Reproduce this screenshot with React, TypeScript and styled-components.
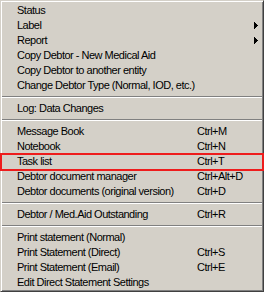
import React, { FC } from "react";
import styled, { createGlobalStyle } from "styled-components";

const menuFace = "#d4d0c8";

const GlobalStyle = createGlobalStyle`
  html, body {
    margin: 0;
    padding: 0;
    background: #ffffff;
  }
  body {
    font-family: Tahoma, "Liberation Sans", Arial, sans-serif;
    font-size: 11px;
    letter-spacing: -0.5px;
    color: #000000;
  }
`;

const Menu = styled.div`
  width: 264px;
  box-sizing: border-box;
  display: flex;
  flex-direction: column;
  background: ${menuFace};
  border-style: solid;
  border-width: 1px;
  border-color: ${menuFace} #404040 #404040 ${menuFace};
  box-shadow: inset 1px 1px #ffffff, inset -1px -1px #808080;
  padding: 2px 1px 1px 1px;
`;

const Item = styled.div`
  position: relative;
  height: 15px;
  display: grid;
  grid-template-columns: 180px 1fr 4px;
  align-items: center;
  padding: 0 4px 0 15px;
  line-height: 15px;
  white-space: nowrap;
`;

const Marker = styled.div`
  position: absolute;
  top: -1px;
  bottom: -2px;
  left: -2px;
  right: -2px;
  border: 2px solid #ee1c1c;
  pointer-events: none;
`;

const Label = styled.span``;

const Shortcut = styled.span``;

const Separator = styled.div`
  height: 8px;
  display: flex;
  flex-direction: column;
  justify-content: center;
  &::before {
    content: "";
    display: block;
    height: 1px;
    background: #808080;
    border-bottom: 1px solid #ffffff;
  }
`;

const Arrow: FC = () => (
  <svg width="4" height="7" viewBox="0 0 4 7">
    <path d="M0 0 L4 3.5 L0 7 Z" fill="#000" shapeRendering="crispEdges" />
  </svg>
);

type Entry =
  | { kind: "item"; label: string; shortcut?: string; sub?: boolean; marked?: boolean }
  | { kind: "sep" };

const entries: Entry[] = [
  { kind: "item", label: "Status" },
  { kind: "item", label: "Label", sub: true },
  { kind: "item", label: "Report", sub: true },
  { kind: "item", label: "Copy Debtor - New Medical Aid" },
  { kind: "item", label: "Copy Debtor to another entity" },
  { kind: "item", label: "Change Debtor Type (Normal, IOD, etc.)" },
  { kind: "sep" },
  { kind: "item", label: "Log: Data Changes" },
  { kind: "sep" },
  { kind: "item", label: "Message Book", shortcut: "Ctrl+M" },
  { kind: "item", label: "Notebook", shortcut: "Ctrl+N" },
  { kind: "item", label: "Task list", shortcut: "Ctrl+T", marked: true },
  { kind: "item", label: "Debtor document manager", shortcut: "Ctrl+Alt+D" },
  { kind: "item", label: "Debtor documents (original version)", shortcut: "Ctrl+D" },
  { kind: "sep" },
  { kind: "item", label: "Debtor / Med.Aid Outstanding", shortcut: "Ctrl+R" },
  { kind: "sep" },
  { kind: "item", label: "Print statement (Normal)" },
  { kind: "item", label: "Print Statement (Direct)", shortcut: "Ctrl+S" },
  { kind: "item", label: "Print Statement (Email)", shortcut: "Ctrl+E" },
  { kind: "item", label: "Edit Direct Statement Settings" },
];

const App: FC = () => (
  <>
    <GlobalStyle />
    <Menu>
      {entries.map((e, i) =>
        e.kind === "sep" ? (
          <Separator key={i} />
        ) : (
          <Item key={i}>
            <Label>{e.label}</Label>
            <Shortcut>{e.shortcut}</Shortcut>
            {e.sub ? <Arrow /> : <span />}
            {e.marked && <Marker />}
          </Item>
        )
      )}
    </Menu>
  </>
);

export default App;
